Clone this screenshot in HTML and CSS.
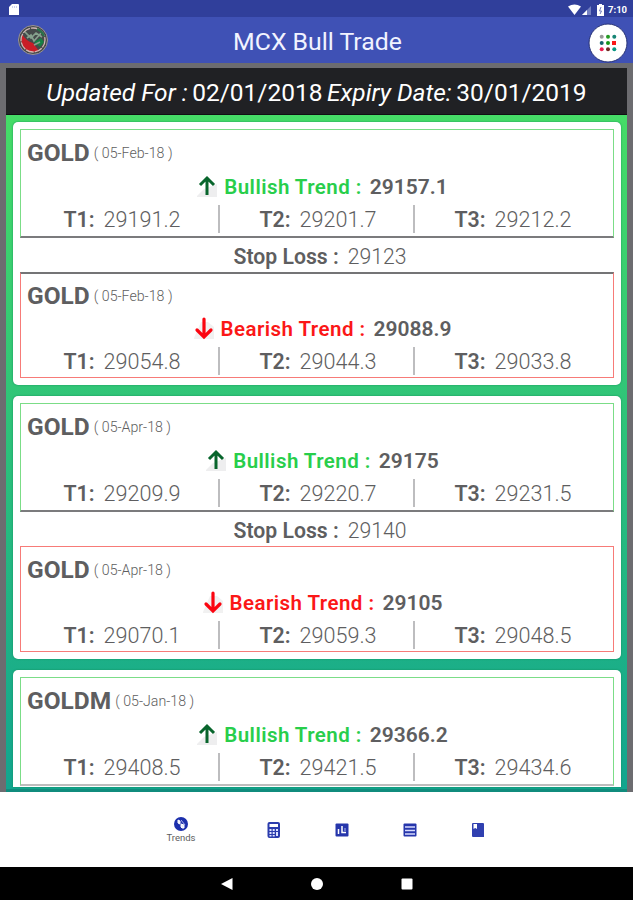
FILE: index.html
```html
<!DOCTYPE html>
<html lang="en">
<head>
<meta charset="utf-8">
<title>MCX Bull Trade</title>
<link rel="stylesheet" href="styles.css">
</head>
<body>
<svg class="defs" width="0" height="0">
  <symbol id="up" viewBox="0 0 22 24"><path d="M1 21L8 14L21 9V22H1Z" fill="#eeeeef"/><path d="M11 20V3M4 10L11 3L18 10" fill="none" stroke="#08652c" stroke-width="3"/></symbol>
  <symbol id="down" viewBox="0 0 22 24"><path d="M1 21L8 5H15L21 10V22H1Z" fill="#f1f1f1"/><path d="M11 2V19M4 13L11 20L18 13" fill="none" stroke="#fb0510" stroke-width="3.2" stroke-linecap="round"/></symbol>
</svg>
<div class="status">
  <svg width="12" height="14" viewBox="0 0 12 14"><path d="M4 1H10Q11 1 11 2V12H1V4Z" fill="#fff"/><path d="M4.500 3V5M6.500 3V5M8.500 3V5" stroke="#b8c0e8" stroke-width=".7"/></svg>
  <div class="signals">
    <svg width="37" height="14" viewBox="0 0 37 14"><path d="M0 3.500Q6.500 -.5 13 3.500L6.500 12Z" fill="#fff"/><path d="M14 12L23 3V12Z" fill="#7480c2"/><path d="M14 12L19 7V12Z" fill="#fff"/><path d="M29 2H31V1H34V2H36V13H29Z" fill="#fff"/><path d="M33 4L31.500 8H33.500L32 11" fill="none" stroke="#6f7bc0"/></svg>
    <span class="time">7:10</span>
  </div>
</div>
<header class="toolbar">
  <svg class="logo" width="32" height="32" viewBox="0 0 32 32"><circle cx="16" cy="16" r="14.500" fill="#45494a" stroke="#9b9495"/><path d="M5 10Q9 17 16 19L22 27Q13 30 7 24Q3 18 5 10Z" fill="#c91e27"/><path d="M17 18L24 14L27 18L23 23Z" fill="#168044"/><circle cx="16" cy="16" r="12" fill="none" stroke="#d0b8b4" stroke-width="1.300" stroke-dasharray="8 1"/><path d="M8 8L14 14L19 9L25 13M10 14L14 11L17 17L24 9M17 21L23 18" fill="none" stroke="#86a18d" stroke-width="1.700"/><path d="M20 5Q25 7 27 12" fill="none" stroke="#257348" stroke-width="2"/></svg>
  <h1>MCX Bull Trade</h1>
  <svg class="menu" width="40" height="40" viewBox="0 0 40 40"><circle cx="20" cy="20" r="19" fill="#fff" stroke="#293477"/><g><circle cx="13.700" cy="13.700" r="2" fill="#999"/><circle cx="20" cy="13.700" r="2" fill="#259b24"/><circle cx="26.300" cy="13.700" r="2" fill="#168575"/><circle cx="13.700" cy="20" r="2" fill="#16646b"/><circle cx="20" cy="20" r="2" fill="#159717"/><path d="M24 18H28V22H24Z" fill="#fa1717"/><circle cx="13.700" cy="26.300" r="2" fill="#e91e50"/><circle cx="20" cy="26.300" r="2" fill="#702b22"/><circle cx="26.300" cy="26.300" r="2" fill="#079681"/></g></svg>
</header>
<main>
  <div class="dates"><span class="line"><i>Updated For :</i> <span>02/01/2018</span> <i>Expiry Date:</i> <span>30/01/2019</span></span></div>
  <div class="list" id="list"></div>
</main>
<nav>
  <div class="tab trends"><svg width="16" height="16" viewBox="0 0 16 16"><circle cx="8" cy="8" r="7" fill="#1c2fac"/><path d="M5 4L7 5V8L5 7ZM8 8L11 9V12H9L8 11Z" fill="#e7eaff" stroke="#fff"/><path d="M8 4L12 9" stroke="#aab2eb"/></svg><span>Trends</span></div>
  <div class="tab"><svg width="14" height="18" viewBox="0 0 14 18"><rect x=".5" y="1" width="12.500" height="16" rx="2" fill="#2b3cad"/><path d="M2.500 3H11V6H2.500Z" fill="#fff"/><path d="M2.500 8H4.500V10H2.500ZM5.700 8H7.700V10H5.700ZM9 8H11V10H9ZM2.500 11H4.500V13H2.500ZM5.700 11H7.700V13H5.700ZM9 11H11V15H9ZM2.500 14H4.500V15.500H2.500ZM5.700 14H7.700V15.500H5.700Z" fill="#dfe3ff"/></svg></div>
  <div class="tab"><svg width="14" height="14" viewBox="0 0 14 14"><rect x=".5" y=".5" width="13" height="13" rx="1" fill="#2636ab"/><path d="M3.500 6V11M7 3V9.500H11" fill="none" stroke="#fff" stroke-width="1.500"/><path d="M10 5V8" stroke="#aeb7ef"/></svg></div>
  <div class="tab"><svg width="14" height="14" viewBox="0 0 14 14"><rect x=".5" y=".5" width="13" height="13" rx="1" fill="#2636ab"/><path d="M2 4H12M2 7.500H12M2 11H12" stroke="#d8dcff" stroke-width="1.500"/></svg></div>
  <div class="tab"><svg width="14" height="14" viewBox="0 0 14 14"><path d="M2 0H12Q13 0 13 1V14H2Q1 14 1 13V1Q1 0 2 0Z" fill="#3040b0"/><path d="M2.500 1H6V6L4.200 5L2.500 6Z" fill="#fff"/></svg></div>
</nav>
<footer>
  <svg width="14" height="14" viewBox="0 0 14 14"><path d="M1 7L12.500 1V13Z" fill="#fff"/></svg>
  <svg width="14" height="14" viewBox="0 0 14 14"><circle cx="7" cy="7" r="6" fill="#fff"/></svg>
  <svg width="14" height="14" viewBox="0 0 14 14"><rect x="1.500" y="1.500" width="11" height="11" rx="1" fill="#fff"/></svg>
</footer>
<script src="app.js"></script>
</body>
</html>
```
FILE: styles.css
```css
* { box-sizing: border-box; }
body { margin: 0; width: 633px; height: 900px; overflow: hidden; display: flex; flex-direction: column; font-family: Roboto, sans-serif; color: #5e5e60; background: #fff; }
.defs { position: absolute; }
.status { height: 17px; flex: none; background: #303f9b; display: flex; justify-content: space-between; align-items: center; padding: 2px 4px 0 8px; }
.signals { display: flex; align-items: center; gap: 3px; }
.time { font-size: 9.500px; font-weight: 700; color: #fff; line-height: 14px; width: 21px; }
.toolbar { height: 46px; flex: none; background: #3f51b5; display: flex; align-items: center; justify-content: space-between; padding: 0 5px 0 17px; }
.logo { margin-top: -1px; }
.toolbar h1 { margin: 3px 2px 0 0; font-size: 24.800px; font-weight: 400; color: #f1f3ff; white-space: nowrap; line-height: 30px; }
.menu { margin-top: 5px; }
main { height: 729px; flex: none; overflow: hidden; padding: 5px 6px 0; background: #6c6c70; display: flex; flex-direction: column; }
.dates { height: 47px; flex: none; background: #202124; border-bottom: 1px solid #101013; color: #fff; font-size: 24.500px; display: flex; align-items: center; justify-content: center; white-space: nowrap; padding-top: 3px; }
.line { display: flex; gap: 4.500px; }
.list { height: 677px; flex: none; overflow: hidden; padding: 7px 6px 0 7px; background: linear-gradient(#46dc67, #12a58f); border-bottom: 3px solid #108c7d; display: flex; flex-direction: column; gap: 11px; }
.card { height: 263px; flex: none; background: #fff; border-radius: 5px; padding: 7px; box-shadow: 0 0 2px #138959; }
.card.partial { height: 117px; border-radius: 5px 5px 0 0; }
.box { border: 1px solid #7bdd87; padding: 0 7px 0 2px; }
.bull { height: 109px; border-bottom: 2px solid #7b7b7d; }
.bear { height: 106px; border: 1px solid #f77b78; border-top: 2px solid #747476; }
.second .bear { border-top: 1px solid #f77b78; padding-top: 1px; }
.partial .bull { border-bottom: 2px solid #bdbdbd; }
.name { height: 44px; display: flex; align-items: center; gap: 4px; padding: 2px 0 0 4px; }
.bear .name { height: 42px; padding-top: 1px; }
.name b { font-size: 24.500px; line-height: 28px; }
.name span { font-size: 14.200px; font-weight: 300; line-height: 18px; }
.trend { height: 31px; display: flex; align-items: center; justify-content: center; font-size: 20.500px; font-weight: 600; padding: 0 0 6px 15px; }
.trend svg { margin-right: 6px; }
.trend em { font-style: normal; margin-right: 8px; letter-spacing: .45px; }
.bull em { color: #28ce4b; }
.bear em { color: #fb1717; }
.trend b { font-size: 21px; }
.trend b, .targets b, .stop b { font-weight: 600; }
.targets { height: 28px; display: grid; grid-template-columns: repeat(3, 195px); }
.targets div { display: flex; align-items: center; justify-content: center; gap: 9px; font-size: 21.600px; line-height: 24px; padding: 1px 0 0 3px; }
.targets b { font-size: 21.300px; }
.targets div + div { border-left: 2px solid #bdbdbf; }
.targets span, .stop span { font-weight: 300; }
.stop { height: 34px; display: flex; align-items: center; justify-content: center; gap: 9px; font-size: 21.200px; padding-left: 6px; padding-top: 3px; }
nav { height: 75px; flex: none; display: flex; align-items: center; padding-left: 154px; background: #fff; }
.tab { width: 68px; height: 18px; display: flex; align-items: center; justify-content: center; flex: none; }
.tab.trends { width: 54px; height: 32px; flex-direction: column; margin-right: 32px; }
.tab span { font-size: 9.500px; line-height: 12px; }
footer { height: 33px; flex: none; background: #000; display: flex; align-items: center; justify-content: center; gap: 76px; }
```
FILE: app.js
```js
const cards = [
  { name: "GOLD", date: "05-Feb-18", stop: "29123", bull: ["29157.1", "29191.2", "29201.7", "29212.2"], bear: ["29088.9", "29054.8", "29044.3", "29033.8"] },
  { name: "GOLD", date: "05-Apr-18", stop: "29140", cls: "second", bull: ["29175", "29209.9", "29220.7", "29231.5"], bear: ["29105", "29070.1", "29059.3", "29048.5"] },
  { name: "GOLDM", date: "05-Jan-18", cls: "partial", bull: ["29366.2", "29408.5", "29421.5", "29434.6"] }
];
function box(card, kind) {
  const v = card[kind];
  const up = kind === "bull";
  const targets = v.slice(1).map((n, i) => `<div><b>T${i + 1}:</b><span>${n}</span></div>`).join("");
  return `<section class="box ${kind}"><div class="name"><b>${card.name}</b><span>( ${card.date} )</span></div>
    <div class="trend"><svg width="22" height="24"><use href="#${up ? "up" : "down"}"/></svg><em>${up ? "Bullish" : "Bearish"} Trend :</em><b>${v[0]}</b></div>
    <div class="targets">${targets}</div></section>`;
}
document.getElementById("list").innerHTML = cards.map(c =>
  `<article class="card ${c.cls || ""}">${box(c, "bull")}${c.bear ? `<div class="stop"><b>Stop Loss :</b><span>${c.stop}</span></div>${box(c, "bear")}` : ""}</article>`
).join("");
```
